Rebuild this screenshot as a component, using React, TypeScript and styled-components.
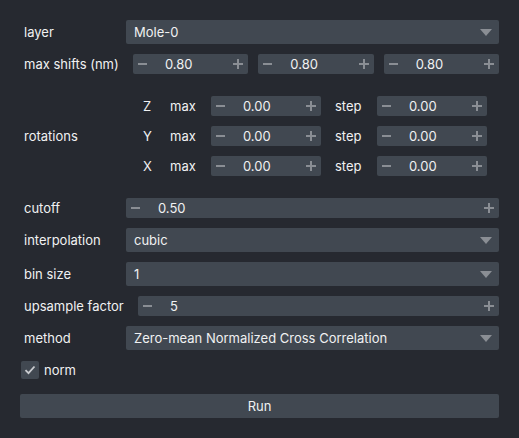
import React, { ReactElement } from 'react'
import styled, { createGlobalStyle } from 'styled-components'

const color = {
  background: '#262930',
  foreground: '#414851',
  text: '#f0f1f2',
  secondary: '#8a8e94',
}

const GlobalStyle = createGlobalStyle`
  html, body {
    margin: 0;
    padding: 0;
    background: ${color.background};
  }
  body {
    font-family: Inter, "Noto Sans", "Liberation Sans", sans-serif;
    font-size: 13px;
    color: ${color.text};
    -webkit-font-smoothing: antialiased;
  }
`

const Panel = styled.div`
  width: 519px;
  height: 438px;
  box-sizing: border-box;
  padding: 20px 20px 0 20px;
  display: flex;
  flex-direction: column;
`

const Row = styled.div<{ $indent?: number; $top?: number }>`
  display: grid;
  grid-template-columns: 106px 1fr;
  align-items: center;
  margin-top: ${({ $top }) => $top ?? 10}px;
  & > :nth-child(2) {
    margin-left: ${({ $indent }) => $indent ?? 0}px;
  }
`

const Label = styled.span`
  padding-left: 4px;
  white-space: nowrap;
  line-height: 16px;
`

const ComboBox = styled.div`
  height: 24px;
  border-radius: 2px;
  background: ${color.foreground};
  display: flex;
  align-items: center;
  justify-content: space-between;
  padding: 0 7px 0 8px;
`

const Arrow = styled.span`
  width: 0;
  height: 0;
  border-left: 6px solid transparent;
  border-right: 6px solid transparent;
  border-top: 7px solid ${color.secondary};
`

const Spin = styled.div<{ $width?: number }>`
  height: 20px;
  border-radius: 2px;
  background: ${color.foreground};
  display: flex;
  align-items: center;
  position: relative;
  width: ${({ $width }) => ($width ? `${$width}px` : 'auto')};
  flex: ${({ $width }) => ($width ? 'none' : '1')};
`

const SpinButton = styled.span<{ $side: 'left' | 'right' }>`
  width: 10px;
  height: 10px;
  position: relative;
  margin: ${({ $side }) => ($side === 'left' ? '0 0 0 5px' : '0 5px 0 auto')};
  &::before,
  &::after {
    content: '';
    position: absolute;
    background: ${color.secondary};
  }
  &::before {
    left: 0;
    right: ${({ $side }) => ($side === 'left' ? '1px' : '0')};
    top: 4px;
    height: 2px;
  }
  &::after {
    display: ${({ $side }) => ($side === 'left' ? 'none' : 'block')};
    top: 0;
    bottom: 0;
    left: 4px;
    width: 2px;
  }
`

const SpinValue = styled.span`
  margin-left: 17px;
`

const Triple = styled.div`
  display: flex;
  gap: 10px;
`

const RotationBlock = styled.div`
  display: grid;
  grid-template-columns: 106px 1fr;
  align-items: center;
  margin: 22px 0 12px 0;
`

const RotationGrid = styled.div`
  display: grid;
  grid-template-columns: 27px 41px 110px 14px 42px 110px;
  grid-auto-rows: 20px;
  row-gap: 10px;
  align-items: center;
  margin-left: 17px;
`

const Cell = styled.span<{ $col: number }>`
  grid-column: ${({ $col }) => $col};
`

const CheckRow = styled.label`
  display: flex;
  align-items: center;
  gap: 5px;
  margin: 11px 0 0 1px;
  height: 18px;
`

const CheckBox = styled.span`
  width: 18px;
  height: 18px;
  border-radius: 2px;
  background: ${color.foreground};
  display: flex;
  align-items: center;
  justify-content: center;
`

const RunButton = styled.button`
  margin-top: 15px;
  height: 24px;
  border: none;
  border-radius: 2px;
  background: ${color.foreground};
  color: ${color.text};
  font: inherit;
  padding: 0;
`

const SpinBox = ({ value, width }: { value: string; width?: number }): ReactElement => (
  <Spin $width={width}>
    <SpinButton $side="left" />
    <SpinValue>{value}</SpinValue>
    <SpinButton $side="right" />
  </Spin>
)

const Select = ({ value }: { value: string }): ReactElement => (
  <ComboBox>
    <span>{value}</span>
    <Arrow />
  </ComboBox>
)

const axes = ['Z', 'Y', 'X']

export default function App(): ReactElement {
  return (
    <Panel>
      <GlobalStyle />
      <Row $top={0}>
        <Label>layer</Label>
        <Select value="Mole-0" />
      </Row>
      <Row $indent={7}>
        <Label>max shifts (nm)</Label>
        <Triple>
          <SpinBox value="0.80" />
          <SpinBox value="0.80" />
          <SpinBox value="0.80" />
        </Triple>
      </Row>
      <RotationBlock>
        <Label>rotations</Label>
        <RotationGrid>
          {axes.map((axis, i) => (
            <React.Fragment key={axis}>
              <Cell $col={1} style={{ gridRow: i + 1 }}>{axis}</Cell>
              <Cell $col={2} style={{ gridRow: i + 1 }}>max</Cell>
              <Cell $col={3} style={{ gridRow: i + 1 }}>
                <SpinBox value="0.00" width={110} />
              </Cell>
              <Cell $col={5} style={{ gridRow: i + 1 }}>step</Cell>
              <Cell $col={6} style={{ gridRow: i + 1 }}>
                <SpinBox value="0.00" width={110} />
              </Cell>
            </React.Fragment>
          ))}
        </RotationGrid>
      </RotationBlock>
      <Row $top={10}>
        <Label>cutoff</Label>
        <SpinBox value="0.50" />
      </Row>
      <Row>
        <Label>interpolation</Label>
        <Select value="cubic" />
      </Row>
      <Row>
        <Label>bin size</Label>
        <Select value="1" />
      </Row>
      <Row $indent={12}>
        <Label>upsample factor</Label>
        <SpinBox value="5" />
      </Row>
      <Row>
        <Label>method</Label>
        <Select value="Zero-mean Normalized Cross Correlation" />
      </Row>
      <CheckRow>
        <CheckBox>
          <svg width="12" height="10" viewBox="0 0 12 10">
            <path d="M1.5 5.2 L4.5 8.2 L10.5 1.5" fill="none" stroke="#c9cbcf" strokeWidth="1.8" />
          </svg>
        </CheckBox>
        <span>norm</span>
      </CheckRow>
      <RunButton>Run</RunButton>
    </Panel>
  )
}
